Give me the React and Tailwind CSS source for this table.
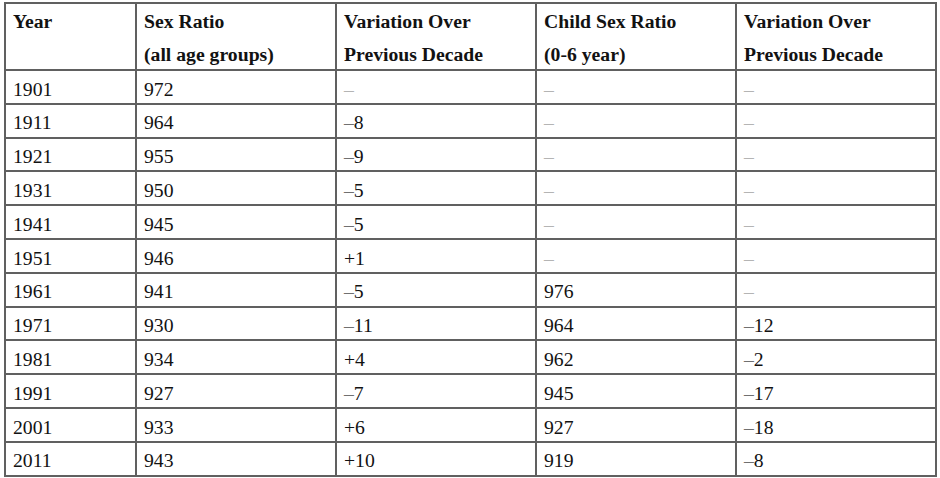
const rows = [
  ['1901', '972', '', '', ''],
  ['1911', '964', '–8', '', ''],
  ['1921', '955', '–9', '', ''],
  ['1931', '950', '–5', '', ''],
  ['1941', '945', '–5', '', ''],
  ['1951', '946', '+1', '', ''],
  ['1961', '941', '–5', '976', ''],
  ['1971', '930', '–11', '964', '–12'],
  ['1981', '934', '+4', '962', '–2'],
  ['1991', '927', '–7', '945', '–17'],
  ['2001', '933', '+6', '927', '–18'],
  ['2011', '943', '+10', '919', '–8'],
];

const headers = [
  ['Year', ''],
  ['Sex Ratio', '(all age groups)'],
  ['Variation Over', 'Previous Decade'],
  ['Child Sex Ratio', '(0-6 year)'],
  ['Variation Over', 'Previous Decade'],
];

function Value({ v }) {
  if (!v) return <span className="text-[#b4b4b4]">–</span>;
  if (v.startsWith('–')) {
    return (
      <span>
        <span className="text-[#707070]">–</span>
        {v.slice(1)}
      </span>
    );
  }
  return <span>{v}</span>;
}

export default function App() {
  return (
    <div className="w-[940px] h-[478px] bg-white pt-[2px] pl-[4px] [font-family:'Liberation_Serif',serif] text-[19.7px] text-[#121212]">
      <div className="w-[933px] grid grid-cols-[129px_198px_198px_198px_198px] grid-rows-[65px_repeat(12,31.8px)] gap-[2px] p-[2px] bg-[#606060]">
        {headers.map(([a, b], i) => (
          <div key={'h' + i} className="bg-white pl-[7px] pt-[1px] font-bold leading-[33px] overflow-hidden">
            <div>{a}</div>
            <div>{b}</div>
          </div>
        ))}
        {rows.map((r) =>
          r.map((c, j) => (
            <div key={r[0] + j} className="bg-white pl-[7px] pt-[5px] flex items-center">
              {j < 2 ? <span>{c}</span> : <Value v={c} />}
            </div>
          ))
        )}
      </div>
    </div>
  );
}
